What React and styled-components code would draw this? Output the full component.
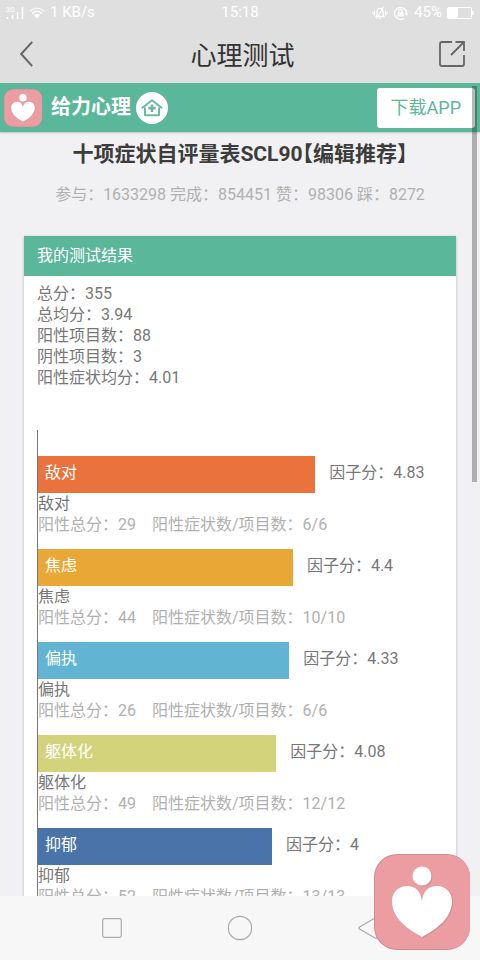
// Result page of the SCL90 test, shown inside the in-app web view
import React from "react";
import styled, { createGlobalStyle } from "styled-components";

const summary = [
  { label: "总分", value: "355" },
  { label: "总均分", value: "3.94" },
  { label: "阳性项目数", value: "88" },
  { label: "阴性项目数", value: "3" },
  { label: "阳性症状均分", value: "4.01" },
];

const factors = [
  { name: "敌对", score: 4.83, total: 29, count: "6/6", color: "#ea733d" },
  { name: "焦虑", score: 4.4, total: 44, count: "10/10", color: "#e9a736" },
  { name: "偏执", score: 4.33, total: 26, count: "6/6", color: "#61b5d2" },
  { name: "躯体化", score: 4.08, total: 49, count: "12/12", color: "#d3d37c" },
  { name: "抑郁", score: 4, total: 52, count: "13/13", color: "#4a73aa" },
];

const HeartLogo = ({ size }) => (
  <LogoSvg width={size} height={size} viewBox="0 0 96 96" aria-hidden="true">
    <rect width="96" height="96" rx="23" fill="#d38a90" />
    <rect x="1" y="1" width="95" height="94" rx="22" fill="#ec9da2" />
    <g fill="#c97c84" opacity="0.6" transform="translate(1 1)">
      <circle cx="48" cy="22" r="9.5" />
      <path d="M48 47C47 37 41 32 33 32C24 32 18 39 18 47C18 63 31 74 48 83C65 74 78 63 78 47C78 39 72 32 63 32C55 32 49 37 48 47Z" />
    </g>
    <g fill="#fff">
      <circle cx="48" cy="22" r="9.5" />
      <path d="M48 47C47 37 41 32 33 32C24 32 18 39 18 47C18 63 31 74 48 83C65 74 78 63 78 47C78 39 72 32 63 32C55 32 49 37 48 47Z" />
    </g>
  </LogoSvg>
);

const SignalIcon = () => (
  <svg width="18" height="14" viewBox="0 0 18 14" aria-hidden="true">
    <text x="0" y="6" fontSize="7" fontFamily="Roboto, sans-serif" fill="#fff">
      3G
    </text>
    <path d="M1.5 11v2M6.5 9v4M11.5 6v7M16.5 1v12" stroke="#fff" strokeWidth="1.5" />
  </svg>
);

const WifiIcon = () => (
  <svg width="16" height="12" viewBox="0 0 16 12" fill="none" aria-hidden="true">
    <path d="M1 4.2C5 0.2 11 0.2 15 4.2" stroke="#fff" strokeWidth="1.4" opacity="0.7" />
    <path d="M3.2 6.5C6 3.8 10 3.8 12.8 6.5" stroke="#fff" strokeWidth="1.7" />
    <path d="M4.8 8C6.6 6.5 9.4 6.5 11.2 8L8 11.6Z" fill="#fff" />
  </svg>
);

const MuteIcon = () => (
  <svg width="16" height="14" viewBox="0 0 16 14" fill="none" stroke="#fff" aria-hidden="true">
    <path d="M4 10.5h8L11 9V5.5C11 3.5 9.7 2.3 8 2.3S5 3.5 5 5.5V9Z" strokeWidth="1.3" />
    <path d="M4.5 12.5L11.5 1M6.8 12.5h2.4" strokeWidth="1.2" />
    <path d="M2.5 4.5v5M0.8 5.8v2.4M13.5 4.5v5M15.2 5.8v2.4" strokeWidth="1" />
  </svg>
);

const RotateLockIcon = () => (
  <svg width="16" height="14" viewBox="0 0 16 14" fill="none" stroke="#fff" aria-hidden="true">
    <path d="M11 12.2A6 6 0 1 1 13.5 8" strokeWidth="1.2" />
    <path d="M11.4 7.2h4.2L13.5 10Z" fill="#fff" stroke="none" />
    <rect x="4.5" y="6" width="6" height="4.5" fill="#fff" stroke="none" />
    <path d="M5.8 6V4.8a1.7 1.7 0 0 1 3.4 0V6" strokeWidth="1.2" />
  </svg>
);

const BatteryIcon = () => (
  <svg width="27" height="12" viewBox="0 0 27 12" fill="none" aria-hidden="true">
    <rect x="0.5" y="0.5" width="24" height="11" rx="1" stroke="#fff" />
    <rect x="1" y="1" width="10" height="10" fill="#fff" />
    <path d="M26 4v4" stroke="#fff" strokeWidth="1.5" />
  </svg>
);

const BackIcon = () => (
  <svg width="14" height="28" viewBox="0 0 14 28" fill="none" aria-hidden="true">
    <path d="M12.2 1.8L1.2 14L12.2 26.2" stroke="#666" strokeWidth="2" />
  </svg>
);

const ShareIcon = () => (
  <svg width="26" height="26" viewBox="0 0 26 26" fill="none" aria-hidden="true">
    <path
      d="M13 1H3Q1 1 1 3V23Q1 25 3 25H23Q25 25 25 23V14M16.5 1H25V10M25 1L12 14"
      stroke="#666"
      strokeWidth="1.8"
    />
  </svg>
);

const HomeIcon = () => (
  <svg width="32" height="32" viewBox="0 0 32 32" fill="none" aria-hidden="true">
    <circle cx="16" cy="16" r="16" fill="#fff" />
    <path
      d="M5.8 16.3L16 8.2L26.2 16.3M9 15.5V23.3H23V15.5"
      stroke="#6abb9e"
      strokeWidth="2"
      strokeLinejoin="round"
    />
    <path d="M16 12.5v7.4M12.3 16.2h7.4" stroke="#6abb9e" strokeWidth="2.6" />
  </svg>
);

const App = () => {
  return (
    <Screen>
      <GlobalStyle />
      <StatusBar>
        <StatusGroup>
          <SignalIcon />
          <WifiIcon />
          <span>1 KB/s</span>
        </StatusGroup>
        <span>15:18</span>
        <StatusGroup $end>
          <MuteIcon />
          <RotateLockIcon />
          <span>45%</span>
          <BatteryIcon />
        </StatusGroup>
      </StatusBar>

      <TitleBar>
        <IconButton aria-label="返回">
          <BackIcon />
        </IconButton>
        <PageTitle>心理测试</PageTitle>
        <IconButton $end aria-label="分享">
          <ShareIcon />
        </IconButton>
      </TitleBar>

      <WebView>
        <Content>
          <Banner>
            <HeartLogo size={38} />
            <Brand>给力心理</Brand>
            <HomeLink href="#home" aria-label="首页">
              <HomeIcon />
            </HomeLink>
            <DownloadLink href="#download">下载APP</DownloadLink>
          </Banner>

          <TestTitle>十项症状自评量表SCL90【编辑推荐】</TestTitle>
          <Meta>参与：1633298 完成：854451 赞：98306 踩：8272</Meta>

          <Card>
            <CardHeader>我的测试结果</CardHeader>
            <Summary>
              {summary.map((s) => (
                <li key={s.label}>
                  {s.label}：{s.value}
                </li>
              ))}
            </Summary>
            <Chart>
              {factors.map((f) => (
                <Factor key={f.name}>
                  <BarRow>
                    <Bar
                      $color={f.color}
                      style={{ width: `calc(${f.score * 12.9}% + 25px)` }}
                    >
                      {f.name}
                    </Bar>
                    <Score>因子分：{f.score}</Score>
                  </BarRow>
                  <FactorName>{f.name}</FactorName>
                  <Detail>
                    <span>阳性总分：{f.total}</span>
                    <span>阳性症状数/项目数：{f.count}</span>
                  </Detail>
                </Factor>
              ))}
            </Chart>
          </Card>
        </Content>
        <ScrollThumb />
      </WebView>

      <NavBar>
        <NavButton aria-label="最近任务">
          <svg width="20" height="20" viewBox="0 0 20 20" fill="none">
            <rect x="0.7" y="0.7" width="18.6" height="18.6" rx="1.5" stroke="#aaa" strokeWidth="1.2" />
          </svg>
        </NavButton>
        <NavButton aria-label="主屏幕">
          <svg width="26" height="26" viewBox="0 0 26 26" fill="none">
            <circle cx="13" cy="13" r="11.7" stroke="#aaa" strokeWidth="1.2" />
          </svg>
        </NavButton>
        <NavButton aria-label="后退">
          <svg width="20" height="22" viewBox="0 0 20 22" fill="none">
            <path d="M1.5 10L17 1Q19 0 19 2V20Q19 22 17 21L1.5 12Q0.5 11 1.5 10Z" stroke="#aaa" strokeWidth="1.2" />
          </svg>
        </NavButton>
      </NavBar>

      <FloatingButton aria-label="给力心理">
        <HeartLogo size={96} />
      </FloatingButton>
    </Screen>
  );
};

const GlobalStyle = createGlobalStyle`
  * {
    box-sizing: border-box;
    margin: 0;
    padding: 0;
  }

  body {
    font-family: Roboto, "Noto Sans CJK SC", sans-serif;
    font-size: 16px;
    line-height: 21px;
    color: #777;
  }

  button {
    border: none;
    background: none;
    cursor: pointer;
  }

  a {
    text-decoration: none;
  }
`;

const Screen = styled.div`
  display: flex;
  flex-direction: column;
  height: 100vh;
  background-color: #f1f1f3;
`;

const LogoSvg = styled.svg`
  display: block;
  flex: none;
`;

const StatusBar = styled.div`
  display: grid;
  grid-template-columns: 1fr auto 1fr;
  align-items: center;
  height: 25px;
  padding: 0 6px;
  background-color: #dfdfdf;
  color: white;
  font-size: 15px;
`;

const StatusGroup = styled.div`
  display: flex;
  align-items: center;
  justify-content: ${(props) => (props.$end ? "flex-end" : "flex-start")};
  gap: 5px;
`;

const TitleBar = styled.header`
  display: grid;
  grid-template-columns: 1fr auto 1fr;
  align-items: center;
  height: 58px;
  padding: 0 15px 0 20px;
  background-color: #dfdfdf;
`;

const IconButton = styled.button`
  display: flex;
  align-items: center;
  justify-self: ${(props) => (props.$end ? "end" : "start")};
  height: 32px;
`;

const PageTitle = styled.h1`
  padding-top: 4px;
  color: #333;
  font-size: 26px;
  font-weight: normal;
  line-height: 32px;
`;

const WebView = styled.main`
  position: relative;
  flex: 1;
  min-height: 0;
`;

const Content = styled.div`
  height: 100%;
  overflow-y: auto;
  scrollbar-width: none;
`;

const Banner = styled.div`
  display: flex;
  align-items: center;
  height: 49px;
  padding: 0 5px 0 4px;
  background-color: #5bb79a;
  box-shadow: 0 1px 2px rgba(0, 0, 0, 0.2);
`;

const Brand = styled.span`
  margin: 0 5px 0 9px;
  color: white;
  font-size: 20px;
  font-weight: bold;
`;

const HomeLink = styled.a`
  display: flex;
`;

const DownloadLink = styled.a`
  margin-left: auto;
  padding: 0 14px;
  border-radius: 3px;
  background-color: white;
  color: #5bb79a;
  font-size: 18px;
  line-height: 40px;
`;

const TestTitle = styled.h2`
  margin-top: 8px;
  color: #3c3c3c;
  font-size: 21px;
  font-weight: bold;
  line-height: 28px;
  text-align: center;
  font-feature-settings: "halt";
`;

const Meta = styled.p`
  margin-top: 16px;
  color: #b0b0b0;
  text-align: center;
`;

const Card = styled.section`
  margin: 31px 24px 24px;
  background-color: white;
  box-shadow: 0 1px 3px rgba(0, 0, 0, 0.25);
`;

const CardHeader = styled.h3`
  padding: 0 13px;
  background-color: #5bb79a;
  color: white;
  font-size: 16px;
  font-weight: normal;
  line-height: 40px;
`;

const Summary = styled.ul`
  padding: 7px 13px 42px;
  list-style: none;
`;

const Chart = styled.div`
  margin: 0 13px;
  padding-top: 26px;
  border-left: 1px solid #777;
`;

const Factor = styled.div`
  padding-bottom: 14px;
`;

const BarRow = styled.div`
  display: flex;
  height: 37px;
`;

const Bar = styled.div`
  padding: 6px 7px;
  background-color: ${(props) => props.$color};
  color: white;
`;

const Score = styled.span`
  padding: 6px 0 0 14px;
  white-space: nowrap;
`;

const FactorName = styled.p`
  color: #777;
`;

const Detail = styled.p`
  display: flex;
  gap: 16px;
  color: #b0b0b0;
  white-space: nowrap;
`;

// Sits over the page like a native overlay scrollbar
const ScrollThumb = styled.div`
  position: absolute;
  top: 3px;
  right: 3px;
  width: 5px;
  height: 396px;
  background-color: rgba(0, 0, 0, 0.28);
`;

const NavBar = styled.nav`
  display: flex;
  flex: none;
  height: 64px;
  padding: 0 10%;
  background-color: #f7f7f7;
`;

const NavButton = styled.button`
  display: flex;
  flex: 1;
  align-items: center;
  justify-content: center;
`;

const FloatingButton = styled.button`
  position: fixed;
  right: 10px;
  bottom: 10px;
`;

export default App;
